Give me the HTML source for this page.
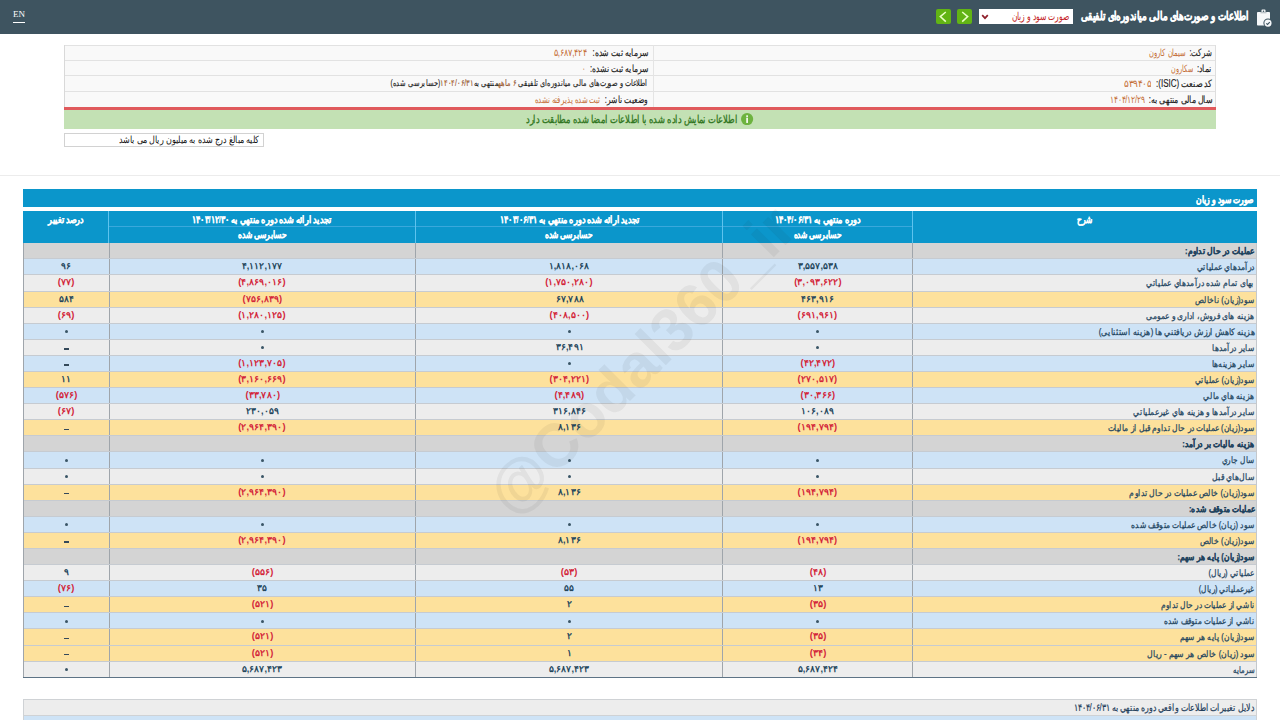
<!DOCTYPE html>
<html lang="fa">
<head>
<meta charset="utf-8">
<title>Codal - صورت سود و زیان</title>
<style>
html,body{margin:0;padding:0;}
body{width:1280px;height:720px;overflow:hidden;background:#fff;position:relative;font-family:"Liberation Sans",sans-serif;font-size:11px;color:#333;}
.abs{position:absolute;}
.t{display:inline-block;white-space:nowrap;direction:rtl;transform-origin:100% 50%;}
.tc{transform-origin:50% 50%;}
#hdr{position:absolute;left:0;top:0;width:1280px;height:34.3px;background:#3e5460;}
#en{position:absolute;left:13px;top:8.5px;font-family:"Liberation Serif",serif;font-size:9px;color:#fff;line-height:11px;}
#en:after{content:"";position:absolute;left:0;right:0;top:13.5px;height:1px;background:#fff;}
.gb{position:absolute;top:8.7px;width:15px;height:15px;background:#62b414;border-radius:2px;}
.gb svg{position:absolute;left:0;top:0;}
#sel{position:absolute;left:978.8px;top:8.7px;width:94px;height:15.2px;background:#fff;}
.seltx{color:#c41c24;font-size:11px;line-height:13px;}
.ttl1{color:#fff;font-weight:bold;font-size:12px;line-height:16px;-webkit-text-stroke:0.3px #fff;}
#info{position:absolute;left:64px;top:44.7px;width:1152px;height:62.7px;background:#f9f9f9;border-left:1px solid #d9d9d9;border-right:1px solid #dedede;box-sizing:border-box;}
.ib{position:absolute;left:0;width:100%;border-top:1px solid #e2e2e2;box-sizing:border-box;}
.il{font-size:10px;line-height:13px;color:#1c1c1c;-webkit-text-stroke:0.15px #1c1c1c;}
.iv{font-size:10px;line-height:13px;color:#c46d35;}
.ov{color:#c46d35;}
.sm{font-size:9px;}
#redl{position:absolute;left:64px;top:107.4px;width:1152px;height:2.2px;background:#e05a5c;}
#green{position:absolute;left:64px;top:109.6px;width:1152px;height:19.9px;background:#c3e1b4;}
.grtx{font-size:11px;line-height:14px;color:#2f7520;-webkit-text-stroke:0.3px #2f7520;}
#note{position:absolute;left:64px;top:133px;width:200px;height:14px;border:1px solid #d2d2d2;box-sizing:border-box;background:#fff;}
.notetx{font-size:10px;line-height:12px;color:#111;}
#sep{position:absolute;left:0;top:175px;width:1280px;height:1px;background:#ececec;}
#tbl{position:absolute;left:23px;top:189.3px;width:1233.5px;height:489px;}
#ttl{position:absolute;left:0;top:0;width:100%;height:17.4px;background:#0b96cb;}
#th{position:absolute;left:0;top:21.8px;width:100%;height:31.6px;background:#0b96cb;}
.vl{position:absolute;top:0;width:1.2px;height:31.6px;background:#5ec3ee;}
.hl{position:absolute;height:1px;background:#3aa8dc;}
.tbltx{color:#fff;font-weight:bold;font-size:10px;line-height:13px;-webkit-text-stroke:0.3px #fff;}
.thtx{color:#fff;font-weight:bold;font-size:9.5px;line-height:13px;-webkit-text-stroke:0.2px #fff;}
.r{position:absolute;left:0;width:1233.5px;box-sizing:border-box;border-bottom:1px solid #c6cbd1;}
.c,.lab{position:absolute;top:0;height:100%;box-sizing:border-box;border-left:1px solid #9fa5ab;text-align:center;font-size:10px;line-height:15px;white-space:nowrap;}
.c{font-size:9px;font-weight:bold;}
.lab .t{-webkit-text-stroke:0.25px currentColor;}
.lab{text-align:right;padding-right:2px;color:#21435e;font-size:9px;line-height:16px;}
.sec{font-weight:bold;}
.pos{color:#24465c;}
.neg{color:#d3253a;}
#tblb{position:absolute;left:0;top:487.6px;width:100%;height:1.3px;background:#5d7385;}
#box2{position:absolute;left:23px;top:698.5px;width:1233.5px;height:40px;border:1px solid #cfd2d5;box-sizing:border-box;background:#ededed;}
#box2 div{position:absolute;left:0;top:15px;width:100%;height:30px;background:#cee3f6;border-top:1px solid #cfd2d5;}
.b2tx{font-size:10px;line-height:13px;color:#1f3d5a;-webkit-text-stroke:0.2px #1f3d5a;}
#wm{position:absolute;left:438.5px;top:329.5px;width:405px;height:61px;line-height:61px;text-align:center;font-size:61px;font-weight:bold;color:rgba(30,30,30,0.06);transform:rotate(-45deg);transform-origin:50% 50%;white-space:nowrap;font-family:"Liberation Sans",sans-serif;}

.zd{display:inline-block;width:3.2px;height:3.2px;border-radius:50%;background:#3a5566;vertical-align:top;margin-top:6.3px;}
.dd{display:inline-block;width:4.8px;height:1.3px;background:#34495a;vertical-align:top;margin-top:8.4px;}

</style>
</head>
<body>
<div id="hdr">
  <div id="en">EN</div>
  <div class="gb" style="left:936px"><svg width="15" height="15" viewBox="0 0 15 15"><path d="M9.8 3 L4.3 7.6 L9.8 12.6" fill="none" stroke="#eaffc6" stroke-width="1.5"/></svg></div>
  <div class="gb" style="left:957px"><svg width="15" height="15" viewBox="0 0 15 15"><path d="M5.2 3 L10.7 7.6 L5.2 12.6" fill="none" stroke="#eaffc6" stroke-width="1.5"/></svg></div>
  <div id="sel"><svg style="position:absolute;left:2px;top:5px" width="8" height="6" viewBox="0 0 8 6"><path d="M1.2 1.2 L4 4.2 L6.8 1.2" fill="none" stroke="#8e1f2a" stroke-width="1.7"/></svg></div>
  <span class="t seltx" style="--w:57.40px;position:absolute;right:211.20px;top:10.00px">صورت سود و زیان</span>
  <span class="t ttl1" style="--w:168.00px;position:absolute;right:31.20px;top:8.00px">اطلاعات و صورت‌های مالی میاندوره‌ای تلفیقی</span>
  <svg style="position:absolute;left:1254px;top:7px" width="20" height="22" viewBox="0 0 20 22">
    <rect x="3" y="5" width="13" height="13.6" rx="0.8" fill="#f6f8fa"/>
    <rect x="7.5" y="2.6" width="4" height="3.6" rx="0.8" fill="#f6f8fa"/>
    <circle cx="9.5" cy="4.2" r="0.8" fill="#3e5460"/>
    <rect x="6.5" y="5.4" width="6" height="0.8" fill="#3e5460" opacity="0.5"/>
    <circle cx="14" cy="16.1" r="4.6" fill="#3e5460"/>
    <circle cx="14" cy="16.1" r="3.6" fill="#f6f8fa"/>
    <path d="M12.3 16.4 L13.5 17.4 L15.8 15.1" fill="none" stroke="#3e5460" stroke-width="1.1"/>
  </svg>
</div>

<div id="info">
  <div class="ib" style="top:0;height:15.5px"></div>
  <div class="ib" style="top:15.5px;height:15px"></div>
  <div class="ib" style="top:30.5px;height:16px"></div>
  <div class="ib" style="top:46.5px;height:16.2px"></div>
  <div style="position:absolute;left:587.7px;top:0;width:1px;height:62.7px;background:#e4e4e4"></div>
</div>
<span class="t il" style="--w:22.30px;position:absolute;right:68.00px;top:46.20px">شرکت:</span>
<span class="t iv" style="--w:36.90px;position:absolute;right:94.50px;top:46.20px">سیمان کارون</span>
<span class="t il" style="--w:14.80px;position:absolute;right:68.00px;top:61.70px">نماد:</span>
<span class="t iv" style="--w:21.90px;position:absolute;right:86.90px;top:61.70px">سکارون</span>
<span class="t il" style="--w:56.40px;position:absolute;right:68.00px;top:76.70px">کد صنعت (ISIC):</span>
<span class="t iv" style="--w:26.80px;position:absolute;right:128.70px;top:76.70px">۵۳۹۴۰۵</span>
<span class="t il" style="--w:63.40px;position:absolute;right:68.00px;top:92.70px">سال مالی منتهی به:</span>
<span class="t iv" style="--w:34.30px;position:absolute;right:135.80px;top:92.70px">۱۴۰۴/۱۲/۲۹</span>
<span class="t il" style="--w:55.80px;position:absolute;right:632.00px;top:46.20px">سرمایه ثبت شده:</span>
<span class="t iv" style="--w:32.80px;position:absolute;right:693.30px;top:46.20px">۵,۶۸۷,۴۲۴</span>
<span class="t il" style="--w:58.40px;position:absolute;right:632.00px;top:61.70px">سرمایه ثبت نشده:</span>
<span class="t iv" style="--w:3.30px;position:absolute;right:695.00px;top:61.70px">۰</span>
<span class="t il sm" style="--w:257.00px;position:absolute;right:632.00px;top:76.70px">اطلاعات و صورت‌های مالی میاندوره‌ای تلفیقی <span class="ov">۶ ماهه</span>منتهی به<span class="ov">۱۴۰۴/۰۶/۳۱</span>(حسابرسی شده)</span>
<span class="t il" style="--w:42.70px;position:absolute;right:632.00px;top:92.70px">وضعیت ناشر:</span>
<span class="t iv" style="--w:65.70px;position:absolute;right:680.10px;top:92.70px">ثبت شده پذیرفته نشده</span>
<div id="redl"></div>
<div id="green"></div>
<svg style="position:absolute;left:741.4px;top:113.2px" width="12.2" height="12.2" viewBox="0 0 12 12"><circle cx="6" cy="6" r="6" fill="#6db33f"/><rect x="5.2" y="2.3" width="1.6" height="1.6" fill="#fff"/><rect x="5.2" y="4.6" width="1.6" height="5.2" fill="#fff"/></svg>
<span class="t grtx" style="--w:211.70px;position:absolute;right:542.30px;top:112.40px">اطلاعات نمایش داده شده با اطلاعات امضا شده مطابقت دارد</span>
<div id="note"></div>
<span class="t notetx" style="--w:140.00px;position:absolute;right:1020.50px;top:134.00px">کلیه مبالغ درج شده به میلیون ریال می باشد</span>
<div id="sep"></div>

<div id="tbl">
  <div id="ttl"></div>
  <div id="th">
    <div class="hl" style="left:85.5px;width:803.5px;top:15.3px"></div>
    <div class="vl" style="left:85.3px"></div>
    <div class="vl" style="left:392.2px"></div>
    <div class="vl" style="left:699.1px"></div>
    <div class="vl" style="left:888.8px"></div>
  </div>
<div class="r" style="top:53.40px;height:16.69px;background:#d4d4d4"><div class="c" style="left:0.00px;width:85.50px"></div><div class="c" style="left:85.50px;width:306.90px"></div><div class="c" style="left:392.40px;width:306.90px"></div><div class="c" style="left:699.30px;width:189.70px"></div><div class="lab sec" style="left:889.00px;width:344.50px"><span class="t" style="--w:69.50px">عملیات در حال تداوم:</span></div></div>
<div class="r" style="top:70.09px;height:16.09px;background:#cee3f6"><div class="c" style="left:0.00px;width:85.50px"><span class="t tc pos" style="--w:10.00px">۹۶</span></div><div class="c" style="left:85.50px;width:306.90px"><span class="t tc pos" style="--w:40.50px">۴,۱۱۲,۱۷۷</span></div><div class="c" style="left:392.40px;width:306.90px"><span class="t tc pos" style="--w:40.60px">۱,۸۱۸,۰۶۸</span></div><div class="c" style="left:699.30px;width:189.70px"><span class="t tc pos" style="--w:40.50px">۳,۵۵۷,۵۳۸</span></div><div class="lab" style="left:889.00px;width:344.50px"><span class="t" style="--w:57.80px">درآمدهاي عملياتي</span></div></div>
<div class="r" style="top:86.18px;height:16.09px;background:#ededed"><div class="c" style="left:0.00px;width:85.50px"><span class="t tc neg" style="--w:16.70px">(۷۷)</span></div><div class="c" style="left:85.50px;width:306.90px"><span class="t tc neg" style="--w:47.30px">(۴,۸۶۹,۰۱۶)</span></div><div class="c" style="left:392.40px;width:306.90px"><span class="t tc neg" style="--w:47.30px">(۱,۷۵۰,۲۸۰)</span></div><div class="c" style="left:699.30px;width:189.70px"><span class="t tc neg" style="--w:47.30px">(۳,۰۹۳,۶۲۲)</span></div><div class="lab" style="left:889.00px;width:344.50px"><span class="t" style="--w:107.80px">بهای تمام شده درآمدهاي عملياتي</span></div></div>
<div class="r" style="top:102.27px;height:16.09px;background:#fde19c"><div class="c" style="left:0.00px;width:85.50px"><span class="t tc pos" style="--w:15.00px">۵۸۴</span></div><div class="c" style="left:85.50px;width:306.90px"><span class="t tc neg" style="--w:39.50px">(۷۵۶,۸۳۹)</span></div><div class="c" style="left:392.40px;width:306.90px"><span class="t tc pos" style="--w:27.80px">۶۷,۷۸۸</span></div><div class="c" style="left:699.30px;width:189.70px"><span class="t tc pos" style="--w:32.70px">۴۶۳,۹۱۶</span></div><div class="lab" style="left:889.00px;width:344.50px"><span class="t" style="--w:59.30px">سود(زيان) ناخالص</span></div></div>
<div class="r" style="top:118.36px;height:16.09px;background:#ededed"><div class="c" style="left:0.00px;width:85.50px"><span class="t tc neg" style="--w:16.70px">(۶۹)</span></div><div class="c" style="left:85.50px;width:306.90px"><span class="t tc neg" style="--w:47.30px">(۱,۲۸۰,۱۲۵)</span></div><div class="c" style="left:392.40px;width:306.90px"><span class="t tc neg" style="--w:39.50px">(۴۰۸,۵۰۰)</span></div><div class="c" style="left:699.30px;width:189.70px"><span class="t tc neg" style="--w:39.50px">(۶۹۱,۹۶۱)</span></div><div class="lab" style="left:889.00px;width:344.50px"><span class="t" style="--w:108.50px">هزینه های فروش، اداری و عمومی</span></div></div>
<div class="r" style="top:134.45px;height:16.09px;background:#cee3f6"><div class="c" style="left:0.00px;width:85.50px"><span class="zd"></span></div><div class="c" style="left:85.50px;width:306.90px"><span class="zd"></span></div><div class="c" style="left:392.40px;width:306.90px"><span class="zd"></span></div><div class="c" style="left:699.30px;width:189.70px"><span class="zd"></span></div><div class="lab" style="left:889.00px;width:344.50px"><span class="t" style="--w:156.20px">هزینه کاهش ارزش دریافتني ها (هزینه استثنایی)</span></div></div>
<div class="r" style="top:150.54px;height:16.09px;background:#ededed"><div class="c" style="left:0.00px;width:85.50px"><span class="dd"></span></div><div class="c" style="left:85.50px;width:306.90px"><span class="zd"></span></div><div class="c" style="left:392.40px;width:306.90px"><span class="t tc pos" style="--w:27.80px">۳۶,۴۹۱</span></div><div class="c" style="left:699.30px;width:189.70px"><span class="zd"></span></div><div class="lab" style="left:889.00px;width:344.50px"><span class="t" style="--w:42.20px">ساير درآمدها</span></div></div>
<div class="r" style="top:166.63px;height:16.09px;background:#cee3f6"><div class="c" style="left:0.00px;width:85.50px"><span class="dd"></span></div><div class="c" style="left:85.50px;width:306.90px"><span class="t tc neg" style="--w:47.30px">(۱,۱۲۳,۷۰۵)</span></div><div class="c" style="left:392.40px;width:306.90px"><span class="zd"></span></div><div class="c" style="left:699.30px;width:189.70px"><span class="t tc neg" style="--w:34.50px">(۴۲,۴۷۲)</span></div><div class="lab" style="left:889.00px;width:344.50px"><span class="t" style="--w:42.90px">ساير هزينه‌ها</span></div></div>
<div class="r" style="top:182.72px;height:16.09px;background:#fde19c"><div class="c" style="left:0.00px;width:85.50px"><span class="t tc pos" style="--w:10.00px">۱۱</span></div><div class="c" style="left:85.50px;width:306.90px"><span class="t tc neg" style="--w:47.30px">(۳,۱۶۰,۶۶۹)</span></div><div class="c" style="left:392.40px;width:306.90px"><span class="t tc neg" style="--w:39.50px">(۳۰۴,۲۲۱)</span></div><div class="c" style="left:699.30px;width:189.70px"><span class="t tc neg" style="--w:39.50px">(۲۷۰,۵۱۷)</span></div><div class="lab" style="left:889.00px;width:344.50px"><span class="t" style="--w:59.80px">سود(زيان) عملياتي</span></div></div>
<div class="r" style="top:198.81px;height:16.09px;background:#cee3f6"><div class="c" style="left:0.00px;width:85.50px"><span class="t tc neg" style="--w:21.70px">(۵۷۶)</span></div><div class="c" style="left:85.50px;width:306.90px"><span class="t tc neg" style="--w:34.50px">(۳۳,۷۸۰)</span></div><div class="c" style="left:392.40px;width:306.90px"><span class="t tc neg" style="--w:29.50px">(۴,۴۸۹)</span></div><div class="c" style="left:699.30px;width:189.70px"><span class="t tc neg" style="--w:34.50px">(۳۰,۳۶۶)</span></div><div class="lab" style="left:889.00px;width:344.50px"><span class="t" style="--w:50.75px">هزينه هاي مالي</span></div></div>
<div class="r" style="top:214.90px;height:16.09px;background:#ededed"><div class="c" style="left:0.00px;width:85.50px"><span class="t tc neg" style="--w:16.70px">(۶۷)</span></div><div class="c" style="left:85.50px;width:306.90px"><span class="t tc pos" style="--w:32.80px">۲۳۰,۰۵۹</span></div><div class="c" style="left:392.40px;width:306.90px"><span class="t tc pos" style="--w:32.80px">۳۱۶,۸۴۶</span></div><div class="c" style="left:699.30px;width:189.70px"><span class="t tc pos" style="--w:32.70px">۱۰۶,۰۸۹</span></div><div class="lab" style="left:889.00px;width:344.50px"><span class="t" style="--w:121.10px">ساير درآمدها و هزينه هاي غيرعملياتي</span></div></div>
<div class="r" style="top:230.99px;height:16.09px;background:#fde19c"><div class="c" style="left:0.00px;width:85.50px"><span class="dd"></span></div><div class="c" style="left:85.50px;width:306.90px"><span class="t tc neg" style="--w:47.30px">(۲,۹۶۴,۳۹۰)</span></div><div class="c" style="left:392.40px;width:306.90px"><span class="t tc pos" style="--w:22.80px">۸,۱۳۶</span></div><div class="c" style="left:699.30px;width:189.70px"><span class="t tc neg" style="--w:39.50px">(۱۹۴,۷۹۴)</span></div><div class="lab" style="left:889.00px;width:344.50px"><span class="t" style="--w:146.80px">سود(زيان) عمليات در حال تداوم قبل از ماليات</span></div></div>
<div class="r" style="top:247.08px;height:16.09px;background:#d4d4d4"><div class="c" style="left:0.00px;width:85.50px"></div><div class="c" style="left:85.50px;width:306.90px"></div><div class="c" style="left:392.40px;width:306.90px"></div><div class="c" style="left:699.30px;width:189.70px"></div><div class="lab sec" style="left:889.00px;width:344.50px"><span class="t" style="--w:72.30px">هزينه ماليات بر درآمد:</span></div></div>
<div class="r" style="top:263.17px;height:16.09px;background:#cee3f6"><div class="c" style="left:0.00px;width:85.50px"><span class="zd"></span></div><div class="c" style="left:85.50px;width:306.90px"><span class="zd"></span></div><div class="c" style="left:392.40px;width:306.90px"><span class="zd"></span></div><div class="c" style="left:699.30px;width:189.70px"><span class="zd"></span></div><div class="lab" style="left:889.00px;width:344.50px"><span class="t" style="--w:32.80px">سال جاري</span></div></div>
<div class="r" style="top:279.26px;height:16.09px;background:#ededed"><div class="c" style="left:0.00px;width:85.50px"><span class="zd"></span></div><div class="c" style="left:85.50px;width:306.90px"><span class="zd"></span></div><div class="c" style="left:392.40px;width:306.90px"><span class="zd"></span></div><div class="c" style="left:699.30px;width:189.70px"><span class="zd"></span></div><div class="lab" style="left:889.00px;width:344.50px"><span class="t" style="--w:42.20px">سال‌هاي قبل</span></div></div>
<div class="r" style="top:295.35px;height:16.09px;background:#fde19c"><div class="c" style="left:0.00px;width:85.50px"><span class="dd"></span></div><div class="c" style="left:85.50px;width:306.90px"><span class="t tc neg" style="--w:47.30px">(۲,۹۶۴,۳۹۰)</span></div><div class="c" style="left:392.40px;width:306.90px"><span class="t tc pos" style="--w:22.80px">۸,۱۳۶</span></div><div class="c" style="left:699.30px;width:189.70px"><span class="t tc neg" style="--w:39.50px">(۱۹۴,۷۹۴)</span></div><div class="lab" style="left:889.00px;width:344.50px"><span class="t" style="--w:125.00px">سود(زيان) خالص عمليات در حال تداوم</span></div></div>
<div class="r" style="top:311.44px;height:16.09px;background:#d4d4d4"><div class="c" style="left:0.00px;width:85.50px"></div><div class="c" style="left:85.50px;width:306.90px"></div><div class="c" style="left:392.40px;width:306.90px"></div><div class="c" style="left:699.30px;width:189.70px"></div><div class="lab sec" style="left:889.00px;width:344.50px"><span class="t" style="--w:66.10px">عمليات متوقف شده:</span></div></div>
<div class="r" style="top:327.53px;height:16.09px;background:#cee3f6"><div class="c" style="left:0.00px;width:85.50px"><span class="zd"></span></div><div class="c" style="left:85.50px;width:306.90px"><span class="zd"></span></div><div class="c" style="left:392.40px;width:306.90px"><span class="zd"></span></div><div class="c" style="left:699.30px;width:189.70px"><span class="zd"></span></div><div class="lab" style="left:889.00px;width:344.50px"><span class="t" style="--w:123.40px">سود (زيان) خالص عمليات متوقف شده</span></div></div>
<div class="r" style="top:343.62px;height:16.09px;background:#fde19c"><div class="c" style="left:0.00px;width:85.50px"><span class="dd"></span></div><div class="c" style="left:85.50px;width:306.90px"><span class="t tc neg" style="--w:47.30px">(۲,۹۶۴,۳۹۰)</span></div><div class="c" style="left:392.40px;width:306.90px"><span class="t tc pos" style="--w:22.80px">۸,۱۳۶</span></div><div class="c" style="left:699.30px;width:189.70px"><span class="t tc neg" style="--w:39.50px">(۱۹۴,۷۹۴)</span></div><div class="lab" style="left:889.00px;width:344.50px"><span class="t" style="--w:54.70px">سود(زيان) خالص</span></div></div>
<div class="r" style="top:359.71px;height:16.09px;background:#d4d4d4"><div class="c" style="left:0.00px;width:85.50px"></div><div class="c" style="left:85.50px;width:306.90px"></div><div class="c" style="left:392.40px;width:306.90px"></div><div class="c" style="left:699.30px;width:189.70px"></div><div class="lab sec" style="left:889.00px;width:344.50px"><span class="t" style="--w:77.00px">سود(زيان) پايه هر سهم:</span></div></div>
<div class="r" style="top:375.80px;height:16.09px;background:#ededed"><div class="c" style="left:0.00px;width:85.50px"><span class="t tc pos" style="--w:5.00px">۹</span></div><div class="c" style="left:85.50px;width:306.90px"><span class="t tc neg" style="--w:21.70px">(۵۵۶)</span></div><div class="c" style="left:392.40px;width:306.90px"><span class="t tc neg" style="--w:16.70px">(۵۳)</span></div><div class="c" style="left:699.30px;width:189.70px"><span class="t tc neg" style="--w:16.70px">(۴۸)</span></div><div class="lab" style="left:889.00px;width:344.50px"><span class="t" style="--w:46.10px">عملياتي (ريال)</span></div></div>
<div class="r" style="top:391.89px;height:16.09px;background:#cee3f6"><div class="c" style="left:0.00px;width:85.50px"><span class="t tc neg" style="--w:16.70px">(۷۶)</span></div><div class="c" style="left:85.50px;width:306.90px"><span class="t tc pos" style="--w:10.00px">۳۵</span></div><div class="c" style="left:392.40px;width:306.90px"><span class="t tc pos" style="--w:10.00px">۵۵</span></div><div class="c" style="left:699.30px;width:189.70px"><span class="t tc pos" style="--w:10.00px">۱۳</span></div><div class="lab" style="left:889.00px;width:344.50px"><span class="t" style="--w:55.75px">غيرعملياتي (ريال)</span></div></div>
<div class="r" style="top:407.98px;height:16.09px;background:#fde19c"><div class="c" style="left:0.00px;width:85.50px"><span class="dd"></span></div><div class="c" style="left:85.50px;width:306.90px"><span class="t tc neg" style="--w:21.70px">(۵۲۱)</span></div><div class="c" style="left:392.40px;width:306.90px"><span class="t tc pos" style="--w:5.00px">۲</span></div><div class="c" style="left:699.30px;width:189.70px"><span class="t tc neg" style="--w:16.70px">(۳۵)</span></div><div class="lab" style="left:889.00px;width:344.50px"><span class="t" style="--w:93.70px">ناشي از عمليات در حال تداوم</span></div></div>
<div class="r" style="top:424.07px;height:16.09px;background:#cee3f6"><div class="c" style="left:0.00px;width:85.50px"><span class="zd"></span></div><div class="c" style="left:85.50px;width:306.90px"><span class="zd"></span></div><div class="c" style="left:392.40px;width:306.90px"><span class="zd"></span></div><div class="c" style="left:699.30px;width:189.70px"><span class="zd"></span></div><div class="lab" style="left:889.00px;width:344.50px"><span class="t" style="--w:90.10px">ناشي از عمليات متوقف شده</span></div></div>
<div class="r" style="top:440.16px;height:16.09px;background:#fde19c"><div class="c" style="left:0.00px;width:85.50px"><span class="dd"></span></div><div class="c" style="left:85.50px;width:306.90px"><span class="t tc neg" style="--w:21.70px">(۵۲۱)</span></div><div class="c" style="left:392.40px;width:306.90px"><span class="t tc pos" style="--w:5.00px">۲</span></div><div class="c" style="left:699.30px;width:189.70px"><span class="t tc neg" style="--w:16.70px">(۳۵)</span></div><div class="lab" style="left:889.00px;width:344.50px"><span class="t" style="--w:74.50px">سود(زيان) پايه هر سهم</span></div></div>
<div class="r" style="top:456.25px;height:16.09px;background:#fde19c"><div class="c" style="left:0.00px;width:85.50px"><span class="dd"></span></div><div class="c" style="left:85.50px;width:306.90px"><span class="t tc neg" style="--w:21.70px">(۵۲۱)</span></div><div class="c" style="left:392.40px;width:306.90px"><span class="t tc pos" style="--w:5.00px">۱</span></div><div class="c" style="left:699.30px;width:189.70px"><span class="t tc neg" style="--w:16.70px">(۳۴)</span></div><div class="lab" style="left:889.00px;width:344.50px"><span class="t" style="--w:107.80px">سود (زيان) خالص هر سهم - ريال</span></div></div>
<div class="r" style="top:472.34px;height:16.09px;background:#ededed"><div class="c" style="left:0.00px;width:85.50px"><span class="zd"></span></div><div class="c" style="left:85.50px;width:306.90px"><span class="t tc pos" style="--w:40.60px">۵,۶۸۷,۴۲۳</span></div><div class="c" style="left:392.40px;width:306.90px"><span class="t tc pos" style="--w:40.60px">۵,۶۸۷,۴۲۳</span></div><div class="c" style="left:699.30px;width:189.70px"><span class="t tc pos" style="--w:40.50px">۵,۶۸۷,۴۲۴</span></div><div class="lab" style="left:889.00px;width:344.50px"><span class="t" style="--w:21.80px">سرمايه</span></div></div>
  <div id="tblb"></div>
  <div class="abs" style="left:0;top:53.4px;width:1px;height:434.7px;background:#9fa5ab"></div>
  <div class="abs" style="left:1232.5px;top:53.4px;width:1px;height:434.7px;background:#c4c8cc"></div>
</div>
<span class="t tbltx" style="--w:57.00px;position:absolute;right:27.00px;top:193.00px">صورت سود و زیان</span>
<span class="t thtx" style="--w:15.00px;position:absolute;right:188.10px;top:213.00px">شرح</span>
<span class="t thtx" style="--w:85.25px;position:absolute;right:420.00px;top:212.50px">دوره منتهي به ۱۴۰۴/۰۶/۳۱</span>
<span class="t thtx" style="--w:48.00px;position:absolute;right:438.50px;top:228.20px">حسابرسی شده</span>
<span class="t thtx" style="--w:138.75px;position:absolute;right:641.25px;top:212.50px">تجدید ارائه شده دوره منتهي به ۱۴۰۳/۰۶/۳۱</span>
<span class="t thtx" style="--w:47.90px;position:absolute;right:687.50px;top:228.20px">حسابرسی شده</span>
<span class="t thtx" style="--w:138.75px;position:absolute;right:948.75px;top:212.50px">تجدید ارائه شده دوره منتهي به ۱۴۰۳/۱۲/۳۰</span>
<span class="t thtx" style="--w:48.25px;position:absolute;right:993.75px;top:228.20px">حسابرسی شده</span>
<span class="t thtx" style="--w:35.50px;position:absolute;right:1196.25px;top:213.00px">درصد تغییر</span>

<div id="box2"><div></div></div>
<span class="t b2tx" style="--w:180.25px;position:absolute;right:26.00px;top:700.50px">دلایل تغییرات اطلاعات واقعي دوره منتهي به ۱۴۰۴/۰۶/۳۱</span>
<div id="wm">@Codal360_ir</div>
<script>
(function(){
  var els=document.querySelectorAll('.t');
  for(var i=0;i<els.length;i++){
    var e=els[i];
    var w=parseFloat(getComputedStyle(e).getPropertyValue('--w'));
    if(!w) continue;
    var n=e.getBoundingClientRect().width;
    if(n>0) e.style.transform='scaleX('+(w/n).toFixed(4)+')';
  }
})();
</script>
</body>
</html>
